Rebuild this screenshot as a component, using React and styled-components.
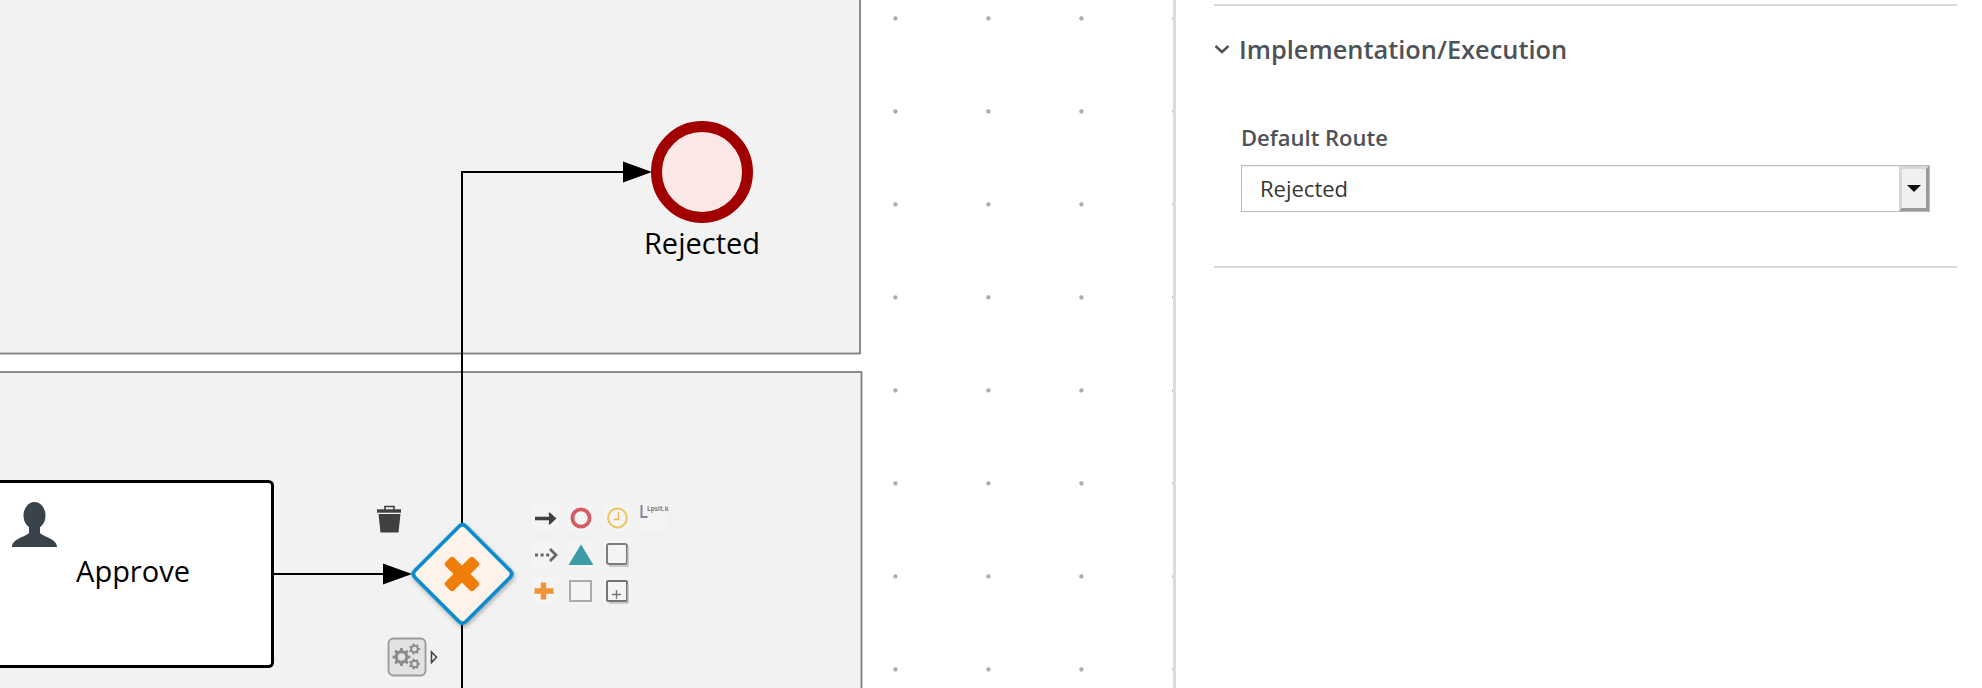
import React from 'react';
import styled, { createGlobalStyle } from 'styled-components';

const GlobalStyle = createGlobalStyle`
    html, body {
        margin: 0;
        padding: 0;
        background: #fff;
        overflow: hidden;
    }
`;

const Page = styled.div`
    display: flex;
    width: 1982px;
    height: 688px;
    overflow: hidden;
    font-family: "Open Sans", "Liberation Sans", sans-serif;
`;

// lienzo con la rejilla de puntos
const Canvas = styled.div`
    flex: 0 0 1173px;
    height: 688px;
    background-color: #fff;
    background-image: radial-gradient(circle at 2.4px 2.4px, #adadad 1.7px, rgba(255, 255, 255, 0) 2.6px);
    background-size: 93px 93px;
    background-position: 56px 16px;
`;

const Diagram = styled.svg`
    display: block;
    font-family: "Open Sans", "Liberation Sans", sans-serif;
`;

const Lane = styled.rect`
    fill: #f2f2f2;
    stroke: #808080;
    stroke-width: 1.8;
`;

const Flow = styled.path`
    fill: none;
    stroke: #000;
    stroke-width: 2;
`;

const Label = styled.text`
    font-size: 29px;
    fill: #000;
    text-anchor: middle;
`;

const Panel = styled.aside`
    flex: 1;
    border-left: 3px solid #dcdcdc;
    padding: 4px 25px 0 38px;
`;

const Section = styled.section`
    border-top: 2px solid #d9d9d9;
    border-bottom: 2px solid #d9d9d9;
    height: 260px;
`;

const SectionHead = styled.div`
    display: flex;
    align-items: center;
    gap: 9px;
    height: 86px;
    color: #4d5258;
`;

const SectionTitle = styled.h3`
    margin: 0;
    font-size: 25.4px;
    font-weight: 600;
    line-height: 32px;
`;

const Field = styled.div`
    padding: 30px 27px 0 27px;
`;

const FieldLabel = styled.label`
    display: block;
    font-size: 22px;
    font-weight: 600;
    line-height: 30px;
    color: #4d5258;
    margin-bottom: 13px;
`;

const Select = styled.div`
    display: flex;
    height: 47px;
    box-sizing: border-box;
    border: 1px solid #bbb;
    background: #fff;
    box-shadow: inset 0 2px 2px -1px #eee;
`;

const SelectValue = styled.span`
    flex: 1;
    padding-left: 18px;
    font-size: 22px;
    line-height: 44px;
    color: #363636;
`;

const SelectButton = styled.span`
    flex: 0 0 30px;
    display: flex;
    align-items: center;
    justify-content: center;
    box-sizing: border-box;
    background: #f0f0f0;
    border-style: solid;
    border-width: 3px;
    border-color: #d8d8d8 #999 #999 #d8d8d8;
`;

const Caret = styled.i`
    width: 0;
    height: 0;
    border-left: 7px solid transparent;
    border-right: 7px solid transparent;
    border-top: 7px solid #111;
`;

// rueda dentada calculada a partir del radio
function gearPath(x, y, outer, inner, teeth) {
    const pts = [];
    for (let i = 0; i < teeth; i++) {
        const step = (Math.PI * 2) / teeth;
        const a = i * step;
        pts.push([a - step * 0.3, inner], [a - step * 0.17, outer], [a + step * 0.17, outer], [a + step * 0.3, inner]);
    }
    return 'M' + pts.map(([a, r]) => `${(x + Math.cos(a) * r).toFixed(2)} ${(y + Math.sin(a) * r).toFixed(2)}`).join('L') + 'Z';
}

function Gear({ x, y, r, teeth }) {
    return (
        <>
            <path d={gearPath(x, y, r, r * 0.76, teeth)} fill="#8a8a8a" />
            <circle cx={x} cy={y} r={r * 0.42} fill="#e2e2e2" />
        </>
    );
}

function PaletteCell({ x, y }) {
    return <rect x={x} y={y} width="27" height="27" fill="#f4f4f4" />;
}

function Palette() {
    const cells = [
        [531, 504], [567, 504], [603, 504], [640, 504],
        [531, 541], [567, 541], [603, 541],
        [531, 577], [567, 577], [603, 577],
    ];
    return (
        <>
            {cells.map(([x, y]) => <PaletteCell key={`${x}-${y}`} x={x} y={y} />)}
            <g filter="url(#soft)">
                {/* flecha */}
                <path d="M535 518.5h17" stroke="#404040" strokeWidth="3.6" fill="none" />
                <path d="M549 513l6 5.5-6 5.5" stroke="#404040" strokeWidth="2" fill="#404040" />
                {/* evento fin */}
                <circle cx="581" cy="518" r="8.6" fill="none" stroke="#d65c62" strokeWidth="3.8" />
                {/* temporizador */}
                <circle cx="617.5" cy="518" r="9.4" fill="none" stroke="#f0c25c" strokeWidth="2" />
                <path d="M618.5 512v7.5h-4.5" fill="none" stroke="#eab84c" strokeWidth="1.4" />
                {/* anotacion */}
                <path d="M641.5 505v12h6" fill="none" stroke="#808a94" strokeWidth="2" />
                <text x="647" y="511" fontSize="6.5" fontWeight="700" fill="#7c7c7c">Lpsit.k</text>
                {/* flecha punteada */}
                <path d="M535 555h15" stroke="#666" strokeWidth="3.2" strokeDasharray="3 2.6" fill="none" />
                <path d="M550 549l6 6-6 6" stroke="#666" strokeWidth="2.8" fill="none" />
                {/* triangulo */}
                <path d="M581 545.5L592.5 564.5H569.5Z" fill="#3e9aa6" stroke="#3e9aa6" strokeWidth="1.2" strokeLinejoin="round" />
                {/* tarea */}
                <rect x="607" y="544" width="20" height="20" rx="2" fill="none" stroke="#7d7d7d" strokeWidth="2" />
                <path d="M609 566h19v-19" fill="none" stroke="#bdbdbd" strokeWidth="1.4" />
                {/* mas */}
                <path d="M543.5 582.5v17M534.5 591h19" stroke="#f09338" strokeWidth="5.4" fill="none" />
                {/* cuadro */}
                <rect x="570" y="581" width="21" height="20" fill="none" stroke="#ababab" strokeWidth="2" />
                {/* subproceso */}
                <rect x="607" y="581" width="20" height="20" rx="1" fill="none" stroke="#757575" strokeWidth="2" />
                <path d="M609 603h19v-19" fill="none" stroke="#bdbdbd" strokeWidth="1.4" />
                <path d="M616.5 590v9M612 594.5h9" stroke="#757575" strokeWidth="1.4" fill="none" />
            </g>
        </>
    );
}

function BpmnDiagram() {
    return (
        <Diagram width="1173" height="688" viewBox="0 0 1173 688">
            <defs>
                <filter id="soft" x="-5%" y="-5%" width="110%" height="110%">
                    <feGaussianBlur stdDeviation="0.45" />
                </filter>
                <filter id="shadow" x="-20%" y="-20%" width="140%" height="140%">
                    <feDropShadow dx="1" dy="2" stdDeviation="2" floodColor="#000" floodOpacity="0.3" />
                </filter>
            </defs>

            <Lane x="-10" y="-10" width="870" height="363.5" />
            <Lane x="-10" y="372" width="871.5" height="330" />

            <Flow d="M462 688V172H626" />
            <path d="M652 172L623 161.5V182.5Z" fill="#000" />

            <circle cx="702" cy="172" r="45.5" fill="#fce7e7" stroke="#a20000" strokeWidth="11" />
            <Label x="702" y="254">Rejected</Label>

            <rect x="-10" y="481.5" width="282.5" height="185" rx="4" fill="#fff" stroke="#000" strokeWidth="3" />
            <g fill="#3a424c">
                <ellipse cx="34.5" cy="515.5" rx="11" ry="13.5" />
                <path d="M29 526h11v7c4 4 17 6 17 14H12c0-8 13-10 17-14z" />
            </g>
            <Label x="133" y="582">Approve</Label>

            <Flow d="M273 574H390" />
            <path d="M412 574L383 563.5V584.5Z" fill="#000" />

            <g filter="url(#shadow)">
                <path
                    d="M459 526.5Q462.5 523 466 526.5L510 570.5Q513.5 574 510 577.5L466 621.5Q462.5 625 459 621.5L415 577.5Q411.5 574 415 570.5Z"
                    fill="#fdf3ea"
                    stroke="#0d8ccc"
                    strokeWidth="3.8"
                />
            </g>
            <g transform="translate(462 574) rotate(45)" fill="#ee7d0a">
                <rect x="-20" y="-6" width="40" height="12" rx="3" />
                <rect x="-6" y="-20" width="12" height="40" rx="3" />
            </g>

            <g filter="url(#soft)">
                <path d="M377 511h24" stroke="#3f3f3f" strokeWidth="3.4" fill="none" />
                <path d="M385 510v-3.5h9v3.5" stroke="#3f3f3f" strokeWidth="1.6" fill="none" />
                <path d="M378.5 514h22l-2 18.5h-18z" fill="#3f3f3f" />
            </g>

            <Palette />

            <rect x="388.5" y="638.5" width="37" height="37" rx="5" fill="#e2e2e2" stroke="#9a9a9a" strokeWidth="1.8" />
            <g filter="url(#soft)">
                <Gear x={401.5} y={657} r={9} teeth={8} />
                <Gear x={414.5} y={649} r={5.6} teeth={7} />
                <Gear x={414.5} y={664} r={5.6} teeth={7} />
            </g>
            <path d="M431.5 652v10.5l5-5.2z" fill="#fff" stroke="#444" strokeWidth="1.6" />
        </Diagram>
    );
}

export default function App() {
    return (
        <Page>
            <GlobalStyle />
            <Canvas>
                <BpmnDiagram />
            </Canvas>
            <Panel>
                <Section>
                    <SectionHead>
                        <svg width="16" height="10" viewBox="0 0 16 10">
                            <path d="M1.5 2l6.5 6 6.5-6" fill="none" stroke="#4d5258" strokeWidth="2.4" />
                        </svg>
                        <SectionTitle>Implementation/Execution</SectionTitle>
                    </SectionHead>
                    <Field>
                        <FieldLabel>Default Route</FieldLabel>
                        <Select>
                            <SelectValue>Rejected</SelectValue>
                            <SelectButton><Caret /></SelectButton>
                        </Select>
                    </Field>
                </Section>
            </Panel>
        </Page>
    );
}
